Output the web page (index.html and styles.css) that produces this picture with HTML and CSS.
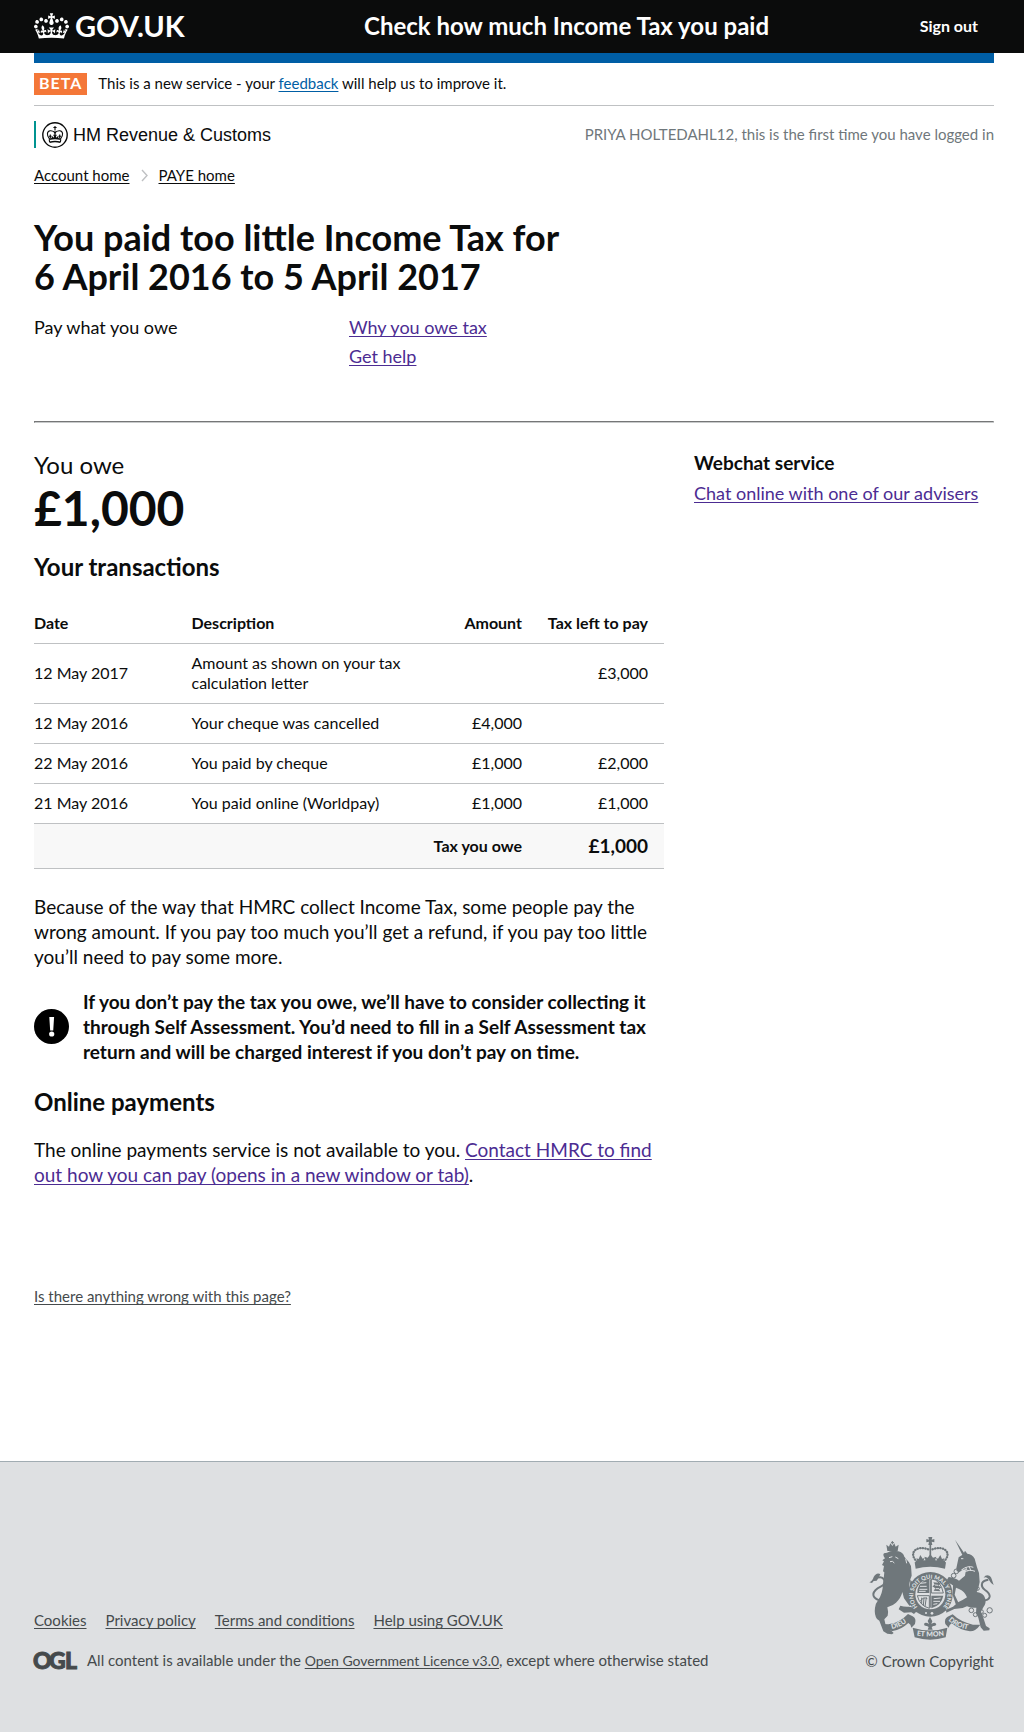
FILE: index.html
```html
<!DOCTYPE html>
<html lang="en">
<head>
<meta charset="utf-8">
<meta name="viewport" content="width=device-width, initial-scale=1">
<title>You paid too little Income Tax - GOV.UK</title>
<link rel="stylesheet" href="styles.css">
</head>
<body>
<header class="site-header">
  <div class="container site-header-row">
    <a class="logo" href="#">
      <svg class="logo-crown" viewBox="0 0 132 97" aria-hidden="true"><path fill="currentColor" fill-rule="evenodd" d="M25 30.2c3.5 1.5 7.7-.2 9.1-3.7 1.5-3.6-.2-7.8-3.9-9.2-3.6-1.4-7.6.3-9.1 3.9-1.4 3.5.3 7.5 3.9 9zM9 39.5c3.6 1.5 7.8-.2 9.2-3.7 1.5-3.6-.2-7.8-3.9-9.1-3.6-1.5-7.6.2-9.1 3.8-1.4 3.5.3 7.5 3.8 9zM4.4 57.2c3.5 1.5 7.7-.2 9.1-3.8 1.5-3.6-.2-7.7-3.9-9.1-3.5-1.5-7.6.3-9.1 3.8-1.4 3.5.3 7.6 3.9 9.1zm38.3-21.4c3.5 1.5 7.7-.2 9.1-3.8 1.5-3.6-.2-7.7-3.9-9.1-3.6-1.5-7.6.3-9.1 3.8-1.3 3.6.4 7.7 3.9 9.1zm64.4-5.6c-3.6 1.5-7.8-.2-9.1-3.7-1.5-3.6.2-7.8 3.8-9.2 3.6-1.4 7.7.3 9.2 3.9 1.3 3.5-.4 7.5-3.9 9zm15.9 9.3c-3.6 1.5-7.7-.2-9.1-3.7-1.5-3.6.2-7.8 3.7-9.1 3.6-1.5 7.7.2 9.2 3.8 1.5 3.5-.3 7.5-3.8 9zm4.7 17.7c-3.6 1.5-7.8-.2-9.2-3.8-1.5-3.6.2-7.7 3.9-9.1 3.6-1.5 7.7.3 9.2 3.8 1.3 3.5-.4 7.6-3.9 9.1zM89.3 35.8c-3.6 1.5-7.8-.2-9.2-3.8-1.4-3.6.2-7.7 3.9-9.1 3.6-1.5 7.7.3 9.2 3.8 1.4 3.6-.3 7.7-3.9 9.1zM69.7 17.7l8.9 4.7V9.3l-8.9 2.8c-.2-.3-.5-.6-.9-.9L72.4 0H59.6l3.5 11.2c-.3.3-.6.5-.9.9l-8.8-2.8v13.1l8.8-4.7c.3.3.6.7.9.9l-5 15.4v.1c-.2.8-.4 1.6-.4 2.4 0 4.1 3.1 7.5 7 8.1h.2c.3 0 .7.1 1 .1.4 0 .7 0 1-.1h.2c4-.6 7.1-4.1 7.1-8.1 0-.8-.1-1.7-.4-2.4V34l-5.1-15.4c.4-.2.7-.6 1-.9zM66 92.8c16.9 0 32.8 1.1 47.1 3.2 4-16.9 8.9-26.7 14-33.5l-9.6-3.4c1 4.9 1.1 7.2 0 10.2-1.5-1.4-3-4.3-4.2-8.7L108.6 76c2.8-2 5-3.2 7.5-3.3-4.4 9.4-10 11.9-13.6 11.2-4.3-.8-6.3-4.6-5.6-7.9 1-4.7 5.7-5.9 8-.5 4.3-8.7-3-11.4-7.6-8.8 7.1-7.2 7.9-13.5 2.1-21.1-8 6.1-8.1 12.3-4.5 20.8-4.7-5.4-12.1-2.5-9.5 6.2 3.4-5.2 7.9-2 7.2 3.1-.6 4.3-6.4 7.8-13.5 7.2-10.3-.9-10.9-8-11.2-13.8 2.5-.5 7.1 1.8 11 7.3L80.2 60c-4.1 4.4-8 5.3-12.3 5.4 1.4-4.4 8-11.6 8-11.6H55.5s6.4 7.2 7.9 11.6c-4.2-.1-8-1-12.3-5.4l1.4 16.4c3.9-5.5 8.5-7.7 10.9-7.3-.3 5.8-.9 12.8-11.1 13.8-7.2.6-12.9-2.9-13.5-7.2-.7-5 3.8-8.3 7.1-3.1 2.7-8.7-4.6-11.6-9.4-6.2 3.7-8.5 3.6-14.7-4.6-20.8-5.8 7.6-5 13.9 2.2 21.1-4.7-2.6-11.9.1-7.7 8.8 2.3-5.5 7.1-4.2 8.1.5.7 3.3-1.3 7.1-5.7 7.9-3.5.7-9-1.8-13.5-11.2 2.5.1 4.7 1.3 7.5 3.3l-4.7-15.4c-1.2 4.4-2.7 7.2-4.3 8.7-1.1-3-.9-5.3 0-10.2l-9.5 3.4c5 6.9 9.9 16.7 14 33.5 14.8-2.1 30.8-3.2 47.7-3.2z"/></svg>
      <span>GOV.UK</span>
    </a>
    <div class="service-bar">
      <span class="service-name">Check how much Income Tax you paid</span>
      <a class="sign-out" href="#">Sign out</a>
    </div>
  </div>
</header>

<div class="container">
  <div class="blue-bar"></div>
  <div class="phase-banner">
    <strong class="phase-tag">BETA</strong>
    <span>This is a new service - your <a class="link-blue" href="#">feedback</a> will help us to improve it.</span>
  </div>

  <div class="org-row">
    <div class="org">
      <svg class="org-crest" viewBox="0 0 26 26" aria-hidden="true">
        <circle cx="13" cy="13" r="12.2" fill="none" stroke="#0b0c0c" stroke-width="1.4"/>
        <g fill="none" stroke="#0b0c0c" stroke-width="1.1">
          <path d="M13 4v4M11.4 5.5h3.2"/>
          <path d="M7.6 17.2C4.2 13 5 9.2 8.2 8.8c2.2-.2 4 .7 4.8 2.2.8-1.5 2.6-2.4 4.8-2.2 3.2.4 4 4.2.6 8.4"/>
          <path d="M13 8.5v6.5M8.3 12.5v4M17.7 12.5v4M6.900 14.200h2.800M16.300 14.200h2.800M11.300 13.200h3.400"/>
          <path stroke-width="1.5" d="M7.200 17.400c3.800-1.200 7.800-1.200 11.600 0M7.600 20.200c3.600-.9 7.200-.9 10.800 0"/>
          <path d="M7.200 17.400l.4 2.800M18.800 17.400l-.4 2.800"/>
        </g>
        <path fill="#0b0c0c" d="M13 12.600l2 3.800h-4zM10.400 14l1.200 2.600H9.200zM15.600 14l1.200 2.600h-2.400z"/>
      </svg>
      <span>HM Revenue &amp; Customs</span>
    </div>
    <p class="greeting">PRIYA HOLTEDAHL12, this is the first time you have logged in</p>
  </div>

  <nav class="breadcrumbs" aria-label="Breadcrumb">
    <a href="#">Account home</a>
    <svg class="chevron" viewBox="0 0 7 13" aria-hidden="true"><path d="M1 1l5 5.500-5 5.500" fill="none" stroke="#bfc1c3" stroke-width="1.400"/></svg>
    <a href="#">PAYE home</a>
  </nav>

  <main>
    <h1>You paid too little Income Tax for<br>6 April 2016 to 5 April 2017</h1>

    <nav class="tabs" aria-label="Sections">
      <span>Pay what you owe</span>
      <ul>
        <li><a href="#">Why you owe tax</a></li>
        <li><a href="#">Get help</a></li>
      </ul>
    </nav>
    <hr>

    <div class="columns">
      <div>
        <p class="owe-label">You owe</p>
        <p class="owe-amount">£1,000</p>
        <h2 class="transactions-title">Your transactions</h2>
        <table>
          <thead>
            <tr><th class="col-date" scope="col">Date</th><th class="col-description" scope="col">Description</th><th class="col-amount num" scope="col">Amount</th><th class="col-left num" scope="col">Tax left to pay</th></tr>
          </thead>
          <tbody>
            <tr><td>12 May 2017</td><td>Amount as shown on your tax calculation letter</td><td></td><td class="num">£3,000</td></tr>
            <tr><td>12 May 2016</td><td>Your cheque was cancelled</td><td class="num">£4,000</td><td></td></tr>
            <tr><td>22 May 2016</td><td>You paid by cheque</td><td class="num">£1,000</td><td class="num">£2,000</td></tr>
            <tr><td>21 May 2016</td><td>You paid online (Worldpay)</td><td class="num">£1,000</td><td class="num">£1,000</td></tr>
          </tbody>
          <tfoot>
            <tr><th class="num" colspan="3" scope="row">Tax you owe</th><td class="num total">£1,000</td></tr>
          </tfoot>
        </table>

        <p class="explanation">Because of the way that HMRC collect Income Tax, some people pay the wrong amount. If you pay too much you’ll get a refund, if you pay too little you’ll need to pay some more.</p>

        <div class="warning">
          <svg class="warning-icon" viewBox="0 0 35 35" role="img" aria-label="Warning"><circle cx="17.500" cy="17.500" r="17.500"/><path fill="#fff" d="M15.300 8h4.800l-.9 13.500h-3z"/><circle fill="#fff" cx="17.700" cy="25" r="2.600"/></svg>
          <strong>If you don’t pay the tax you owe, we’ll have to consider collecting it through Self Assessment. You’d need to fill in a Self Assessment tax return and will be charged interest if you don’t pay on time.</strong>
        </div>

        <h2 class="payments-title">Online payments</h2>
        <p>The online payments service is not available to you. <a href="#">Contact HMRC to find out how you can pay (opens in a new window or tab)</a>.</p>
      </div>

      <aside>
        <h2>Webchat service</h2>
        <a href="#">Chat online with one of our advisers</a>
      </aside>
    </div>
  </main>
  <p class="report"><a href="#">Is there anything wrong with this page?</a></p>
</div>

<footer>
  <div class="container footer-row">
    <div>
      <ul class="footer-links">
        <li><a href="#">Cookies</a></li>
        <li><a href="#">Privacy policy</a></li>
        <li><a href="#">Terms and conditions</a></li>
        <li><a href="#">Help using GOV.UK</a></li>
      </ul>
      <div class="licence">
        <svg class="ogl" viewBox="0 0 43 18" role="img" aria-label="OGL"><text x="-1 15 31" y="17">OGL</text></svg>
        <p>All content is available under the <a class="licence-link" href="#">Open Government Licence v3.0</a>, except where otherwise stated</p>
      </div>
    </div>
    <a class="copyright" href="#">
      <svg class="crest" viewBox="12 14 375 309" aria-hidden="true">
        <defs>
          <path id="garter" d="M158 224a51 51 0 1 1 76 0"/>
          <path id="bandLeft" d="M80 290q30-5 54-28"/>
          <path id="bandRight" d="M250 264q22 21 60 28"/>
          <path id="bandMid" d="M146 308q50 9 100 0"/>
        </defs>
        <g class="crest-ink">
          <!-- lion -->
          <path d="M64 37l8 6 4-10 6 8 6-8 4 10 9-6-3 19H67z"/><path d="M78 31h9M82 26v10" class="line3"/>
          <path d="M66 61q14-9 34-4 15 4 18 16l14 17q8 10 7 24l1 16q-10 22-6 44l10 26q14-4 27 7l12 13-5 2-7-2-5 5-10-6-9-2-14 3-16-22-5-19q-4 18-19 32-8 8-26 14 4 14 1 25l-10 11 5 22q1 6 16 12l7 7-5 4-14-2-12-7-12-32-7-5q-9-14-6-34 1-12 10-24 12-16 14-44l4-38-4-3 3-16-6-3 6-11-5-3 8-6q-8-10-3-15z"/>
          <path d="M136 142q9 10 14 17l-9 3 5 9-12 2zM106 220q12 4 25 3 11 0 16 7l12 9-7 1-5 5-8-5-22 1-16-10z"/>
          <path class="line7" d="M43 204q-19-6-18-19 2-12 22-22 17-8 10-22-6-9-18-5"/>
          <path d="M13 150q10-4 13-16 8-15 20-9l-4 10-7 10-9 1-5 6z"/>
          <!-- unicorn -->
          <path d="M270 22l28 41-6 5zM281 75l14-9 5-11 7 9q15 1 22 15l7 26 6 17 2 27q-4 21-9 30 21 3 25 18 5 16-5 28l-7 13 8 21 7 22 11 7-1 6-17 1-9-10-7-29-7-14 1-16q-14 2-28-4l-13 5-25 3-24 11-1-9 21-9 15-13q17-8 27-15-8-20-24-25l-9-4-4 21 10 21 1 10-8-3-9-27 1-29-13-8-5-9 5-8q22 3 31 11l18-15 3-20-10 3-11 7-7-4-1-8z"/>
          <path class="line7" d="M345 205q27 1 29-12 1-10-14-20-13-9-8-22 4-7 18-9"/>
          <path d="M386 158q-8-4-12-12-7-14-18-10 6-10 17-6 6 3 9 16z"/>
          <!-- imperial crown -->
          <path d="M149 90q47-15 94 0l-3 19q-44-11-88 0z"/>
          <path d="M190 14h12l-2 8 8-2v10l-8-2 2 10h-12l2-10-8 2V20l8 2z"/>
          <path class="line5 beads" d="M156 88q-17-16-9-31 15-17 45-5M236 88q17-16 9-31-15-17-45-5"/>
          <path class="line5" d="M196 36v36"/><path d="M196 66l8 10 10-3-5 15h-26l-5-15 10 3zM166 68l7 11 6-3-5 13h-16l-4-11 7 2zM226 68l-7 11-6-3 5 13h16l4-11-7 2z"/>
          <!-- garter and shield -->
          <circle cx="196" cy="186" r="67"/>
        </g>
        <circle class="crest-gap" cx="196" cy="186" r="45"/>
        <g class="crest-ink">
          <path d="M163 158q14-17 30-19v43h-36q0-15 6-24zM199 190h36q-5 28-36 38z"/>
          <path class="line3" d="M199 182v-43q28 4 36 43zM157 190h36v38q-29-8-36-38zM170 196v19M177 196l-2 24M184 195l-4 28M166 206q10-14 21-7M196 142v84"/>
          <path d="M205 150l22 2-6 8 9 5-8 6 4 6-20-2 5-7-9-6 7-5z"/>
        </g>
        <path class="crest-light" d="M166 153l18-2M165 162h20M163 171h24M162 177h20M206 199l21-2M205 207h20M205 216l12-2M210 158l10 1M212 169h10"/>
        <text class="crest-text"><textPath href="#garter" startOffset="0">HONI SOIT QUI MAL Y PENSE</textPath></text>
        <circle class="crest-gap" cx="183" cy="242" r="3"/><circle class="crest-gap" cx="201" cy="243" r="4"/>
        <!-- faces, mane and collar -->
        <path class="crest-light" d="M72 76l10-3M91 74l9 5M75 88q8-4 13 4M122 79l3 14M288 79h7M289 113q21-15 36-8M294 122q19-13 36-5M293 111l5 12M302 105l5 11M313 103l4 11"/>
        <!-- chain -->
        <g class="chain"><circle cx="274" cy="117" r="7"/><circle cx="266" cy="130" r="7"/><circle cx="269" cy="153" r="7"/><circle cx="338" cy="169" r="5"/><circle cx="341" cy="197" r="6"/><circle cx="333" cy="216" r="6"/><circle cx="319" cy="234" r="7"/><circle cx="331" cy="247" r="6"/><circle cx="349" cy="238" r="6"/><circle cx="359" cy="249" r="6"/><circle cx="374" cy="234" r="8"/></g>
        <!-- ribbon -->
        <g class="crest-ink">
          <path d="M51 275l19 1q32-3 59-31l14 7q12 6 7 23l-11 11q-1-10-9-14-21 20-47 24-17 1-32-21z"/>
          <path d="M346 277l-22 0q-38-8-61-31l-15 7q-11 6-7 22l10 11q2-9 9-13 24 20 55 24 18-1 31-20z"/>
          <path d="M143 286q53 17 104 0l-5 29q-47 14-93 0z"/>
          <path d="M195 254l7 13-3 8q12-8 15 1-1 6-9 5l-5 3 3 8h-15l3-8-5-3q-9 1-9-6 4-7 15 0l-4-9z"/>
        </g>
        <g class="crest-text crest-motto"><text><textPath href="#bandLeft">DIEU</textPath></text><text><textPath href="#bandRight">DROIT</textPath></text><text><textPath href="#bandMid" startOffset="50%" text-anchor="middle">ET MON</textPath></text></g>
      </svg>
      <span>© Crown Copyright</span>
    </a>
  </div>
</footer>
</body>
</html>
```
FILE: styles.css
```css
* { box-sizing: border-box; }

body {
  margin: 0;
  background: #fff;
  color: #0b0c0c;
  font: 19px/25px Lato, Roboto, sans-serif;
}

h1, h2, p, ul { margin: 0; padding: 0; }
ul { list-style: none; }
svg { display: block; flex: none; }
a { color: #4c2c92; text-underline-offset: 2px; text-decoration-thickness: 1px; text-decoration-skip-ink: none; }

.container { padding: 0 30px 0 34px; }

/* Header */
.site-header { background: #0b0c0c; color: #fff; }
.site-header a { color: #fff; text-decoration: none; }
.site-header-row { display: grid; grid-template-columns: 11fr 21fr; align-items: center; min-height: 53px; padding-bottom: 2px; }
.logo { display: flex; align-items: center; gap: 6px; font-size: 29px; line-height: 30px; font-weight: 700; }
.logo-crown { width: 35px; height: 26px; }
.service-bar { display: flex; justify-content: space-between; align-items: center; padding-right: 16px; }
.service-name { font-size: 24px; line-height: 30px; font-weight: 700; }
.sign-out { font-size: 16px; line-height: 20px; font-weight: 700; }
.blue-bar { height: 10px; background: #005ea5; }

/* Phase banner and department */
.phase-banner { display: flex; gap: 11px; padding: 10px 0; border-bottom: 1px solid #bfc1c3; font-size: 15px; line-height: 20px; }
.phase-tag { padding: 0 5px 2px; background: #f47738; color: #fff; font-size: 16px; letter-spacing: 1px; }
.link-blue { color: #005ea5; }
.org-row { display: flex; justify-content: space-between; margin-top: 15px; }
.org { display: flex; align-items: center; gap: 5px; height: 27px; padding-left: 6px; border-left: 2px solid #009390; font: 18px/26px "Liberation Sans", Arial, sans-serif; }
.org-crest { width: 26px; height: 26px; }
.greeting { color: #6f777b; font-size: 15px; line-height: 26px; }

.breadcrumbs { display: flex; align-items: center; gap: 11px; margin-top: 17px; font-size: 15px; line-height: 20px; }
.breadcrumbs a { color: #0b0c0c; }
.chevron { width: 7px; height: 13px; }

/* Page title */
h1 { margin-top: 33px; font-size: 36px; line-height: 39px; }
h2 { font-size: 24px; line-height: 30px; }
.tabs { display: grid; grid-template-columns: 21fr 43fr; margin-top: 19px; font-size: 18px; }
.tabs li { margin-bottom: 4px; }
hr { margin: 48px 0 27px; border: 1px inset #c8cacb; }

.columns { display: grid; grid-template-columns: 21fr 11fr; }
aside { padding-left: 30px; white-space: nowrap; font-size: 18px; }
aside h2 { margin-bottom: 6px; font-size: 19px; line-height: 25px; }

.owe-label { font-size: 24px; line-height: 30px; }
.owe-amount { font-size: 48px; line-height: 56px; font-weight: 700; }
.transactions-title { margin: 16px 0 22px; }

/* Transactions */
table { width: 100%; border-collapse: collapse; table-layout: fixed; font-size: 16px; line-height: 20px; }
th, td { padding: 9px 0 10px; border-bottom: 1px solid #bfc1c3; text-align: left; }
.num { text-align: right; white-space: nowrap; }
th.num, td.num { padding-right: 16px; text-align: right; }
.col-date { width: 25%; }
.col-description { width: 38%; }
.col-amount { width: 17%; }
.col-left { width: 20%; }
tbody td:nth-child(2) { padding-right: 20px; }
tfoot { background: #f8f8f8; }
.total { font-size: 19px; line-height: 25px; font-weight: 700; }

.explanation { margin-top: 25px; }
.warning { display: flex; align-items: center; gap: 14px; margin-top: 20px; }
.warning-icon { width: 35px; height: 35px; }
.payments-title { margin: 23px 0 20px; }
.report { margin: 99px 0 155px; font-size: 15px; line-height: 20px; }
.report a { color: #454a4c; }

/* Footer */
footer { padding: 75px 0 61px; border-top: 1px solid #a1acb2; background: #dee0e2; color: #454a4c; font-size: 15px; line-height: 20px; }
footer a { color: #454a4c; }
.footer-row { display: flex; justify-content: space-between; align-items: flex-end; }
.footer-links { display: flex; gap: 19px; margin-bottom: 20px; }
.licence { display: flex; align-items: center; gap: 10px; }
.licence-link { font-size: 14px; }
.ogl { width: 43px; height: 18px; overflow: visible; fill: #454a4c; stroke: #454a4c; stroke-width: 1; font-size: 23px; font-weight: 900; }
.copyright { display: flex; flex-direction: column; align-items: flex-end; gap: 11px; text-decoration: none; }
.crest { width: 125px; height: 103px; }
.crest-ink { fill: #6f777b; stroke: none; }
.line3, .line5, .line7 { fill: none; stroke: #6f777b; stroke-width: 3; }
.line5 { stroke-width: 5; }
.line7 { stroke-width: 6; }
.beads { stroke-width: 7; stroke-linecap: round; stroke-dasharray: 1 7; }
.crest-gap { fill: #dee0e2; }
.crest-light { fill: none; stroke: #dee0e2; stroke-width: 3; }
.chain { fill: none; stroke: #6f777b; stroke-width: 3; }
.crest-text { fill: #dee0e2; font-size: 17px; font-weight: 900; }
.crest-motto { font-size: 21px; }
```
